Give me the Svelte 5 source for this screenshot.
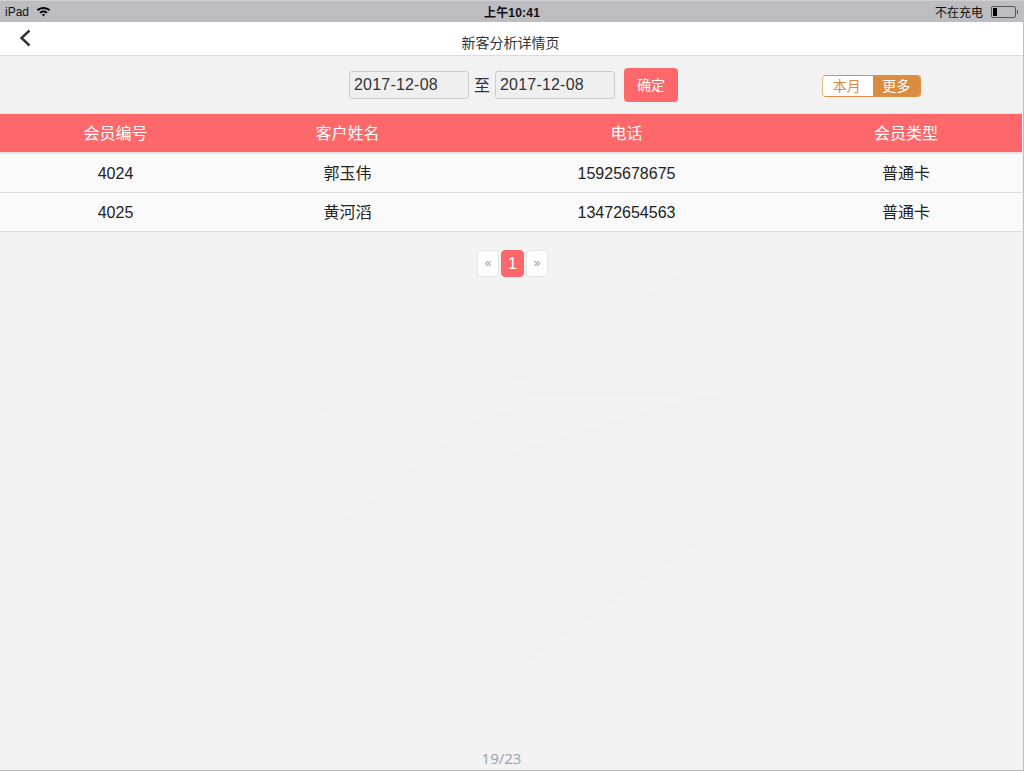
<script>
  const columns = ['会员编号', '客户姓名', '电话', '会员类型'];
  const rows = [
    ['4024', '郭玉伟', '15925678675', '普通卡'],
    ['4025', '黄河滔', '13472654563', '普通卡']
  ];
</script>

<div class="page">
  <svg class="watermark" width="1024" height="771" viewBox="0 0 1024 771" aria-hidden="true">
    <path d="M511 295H650L687 268V398H527V380H511Z" />
    <path d="M313 543 480 417 511 412V543Z" />
    <path d="M511 452 690 398H720V543H697L511 673Z" />
    <path d="M318 399H335V414H318Z" />
  </svg>

  <header class="status">
    <div class="st-left">
      <span>iPad</span>
      <svg class="wifi" width="15" height="11" viewBox="0 0 15 11">
        <path d="M7.5 1C4.9 1 2.6 2 .8 3.6l1.3 1.5C3.5 3.8 5.4 3 7.5 3s4 .8 5.4 2.1l1.3-1.5C12.4 2 10.1 1 7.5 1z" fill="#000"/>
        <path d="M7.5 4.6c-1.6 0-3 .6-4.1 1.6l1.3 1.4c.7-.7 1.7-1.1 2.8-1.1s2.1.4 2.8 1.1l1.3-1.4c-1.1-1-2.5-1.6-4.1-1.6z" fill="#000"/>
        <path d="M7.5 8c-.7 0-1.2.2-1.7.6l1.7 1.9 1.7-1.9C8.7 8.2 8.2 8 7.5 8z" fill="#000"/>
      </svg>
    </div>
    <div class="st-time">上午10:41</div>
    <div class="st-right">
      <span>不在充电</span>
      <div class="battery"><i></i></div>
      <b class="nub"></b>
    </div>
  </header>

  <nav class="nav">
    <svg class="back" width="14" height="20" viewBox="0 0 14 20">
      <path d="M11.5 2.5 3.5 10l8 7.5" fill="none" stroke="#333" stroke-width="2.4"/>
    </svg>
    <h1>新客分析详情页</h1>
  </nav>

  <section class="toolbar">
    <div class="dates">
      <div class="date">2017-12-08</div>
      <span class="to">至</span>
      <div class="date">2017-12-08</div>
      <button class="ok">确定</button>
    </div>
    <div class="seg">
      <span class="a">本月</span><span class="b">更多</span>
    </div>
  </section>

  <table>
    <colgroup><col class="c1"/><col class="c2"/><col class="c3"/><col class="c4"/></colgroup>
    <thead><tr>{#each columns as c}<th><span>{c}</span></th>{/each}</tr></thead>
    <tbody>
      {#each rows as r}
        <tr>{#each r as v}<td>{v}</td>{/each}</tr>
      {/each}
    </tbody>
  </table>

  <div class="pager">
    <span class="pg">«</span><span class="pg on">1</span><span class="pg">»</span>
  </div>

  <div class="spacer"></div>
  <footer class="foot">19/23</footer>
</div>

<style>
  :global(body) { margin: 0; background: #f3f3f3; }
  .page {
    width: 1024px; height: 771px; display: flex; flex-direction: column;
    background: #f3f3f3; overflow: hidden; box-sizing: border-box;
    border-bottom: 1px solid #b5b5b5; border-right: 1px solid #bdbdbd; position: relative; isolation: isolate;
    font-family: "Liberation Sans", "Noto Sans CJK SC", sans-serif;
  }
  .watermark { position: absolute; left: 0; top: 0; z-index: -1; fill: #f2f2f2; }
  .status {
    height: 22px; background: #bdbcc1; border-top: 1px solid #cfcfd1; box-sizing: border-box;
    display: grid; grid-template-columns: 1fr auto 1fr; align-items: center;
    font-size: 12px; color: #111; padding: 0 5px 0 5px;
  }
  .st-left { display: flex; align-items: center; gap: 7px; }
  .st-time { font-size: 12px; font-weight: 700; letter-spacing: .2px; color: #111; margin-left: 1px; }
  .st-right { display: flex; align-items: center; justify-content: flex-end; }
  .st-right span { font-size: 12px; margin-right: 8px; }
  .battery {
    width: 21px; height: 8px; border: 1px solid #555; border-radius: 2px;
    padding: 1px; display: flex;
  }
  .battery i { width: 4px; background: #000; display: block; }
  .nub { width: 1px; height: 4px; background: #555; margin-left: 1px; }
  .nav {
    height: 34px; background: #fff; border-bottom: 1px solid #dcdcdc; box-sizing: border-box;
    position: relative; display: flex; align-items: center; justify-content: center;
  }
  .back { position: absolute; left: 18px; top: 6px; }
  h1 { margin: 7px 0 0 -2px; font-size: 14px; font-weight: 400; color: #333; }
  .toolbar { height: 58px; box-sizing: border-box; display: flex; align-items: flex-start; position: relative; border-bottom: 1px solid #e4e4e4; background: #f2f2f2; }
  .dates { display: flex; align-items: center; margin: 12px 0 0 349px; }
  .date {
    width: 120px; height: 28px; box-sizing: border-box; background: #efefef;
    border: 1px solid #ccc; border-radius: 3px; font-size: 16px; letter-spacing: .2px; color: #333;
    line-height: 26px; padding-left: 4px;
  }
  .to { width: 26px; text-align: center; font-size: 16px; color: #333; margin-top: -2px; }
  .ok {
    margin-left: 9px; width: 54px; height: 34px; border: 0; border-radius: 4px;
    background: #ff686b; color: #fff; font: inherit; font-size: 14px; padding: 0 0 2px;
  }
  .seg {
    position: absolute; left: 822px; top: 19px; display: flex; height: 22px; width: 99px;
    box-sizing: border-box; border: 1px solid #dd8f42; border-left-color: #e8b98a; border-radius: 4px; overflow: hidden; font-size: 14px;
  }
  .seg span { flex: 1; text-align: center; line-height: 21px; }
  .a { background: #fff; color: #d98a3e; padding-right: 2px; }
  .b { background: #dc8c40; color: #fff; }
  table { width: 1022px; border-collapse: collapse; table-layout: fixed; }
  .c1 { width: 231px; } .c2 { width: 233px; } .c3 { width: 325px; } .c4 { width: 233px; }
  th {
    height: 39px; padding: 0 0 2px; box-sizing: border-box; background: #ff686b; color: #fff; font-size: 16px; font-weight: 400;
    border-bottom: 2px solid #e2e2e2;
  }
  td {
    height: 38px; padding: 2px 0 0; box-sizing: border-box; background: #fafafa; color: #222; font-size: 16px; line-height: 36px; text-align: center;
    border-bottom: 1px solid #dcdcdc;
  }
  th:nth-child(4), td:nth-child(4) { padding-left: 1px; }
  .pager { display: flex; justify-content: center; gap: 2px; margin-top: 18px; padding-left: 2px; }
  .pg {
    width: 22px; height: 27px; box-sizing: border-box; background: #fff; border: 1px solid #e6e6e6;
    border-radius: 4px; color: #999; font-size: 12px; line-height: 25px; text-align: center;
  }
  .pg.on { width: 23px; background: #ff686b; border-color: #ff686b; color: #fff; font-size: 16px; }
  .spacer { flex: 1; }
  .foot { height: 24px; padding-right: 20px; text-align: center; font-size: 15px; color: #a0a6b8; line-height: 24px; font-family: "Noto Sans", sans-serif; }
</style>
